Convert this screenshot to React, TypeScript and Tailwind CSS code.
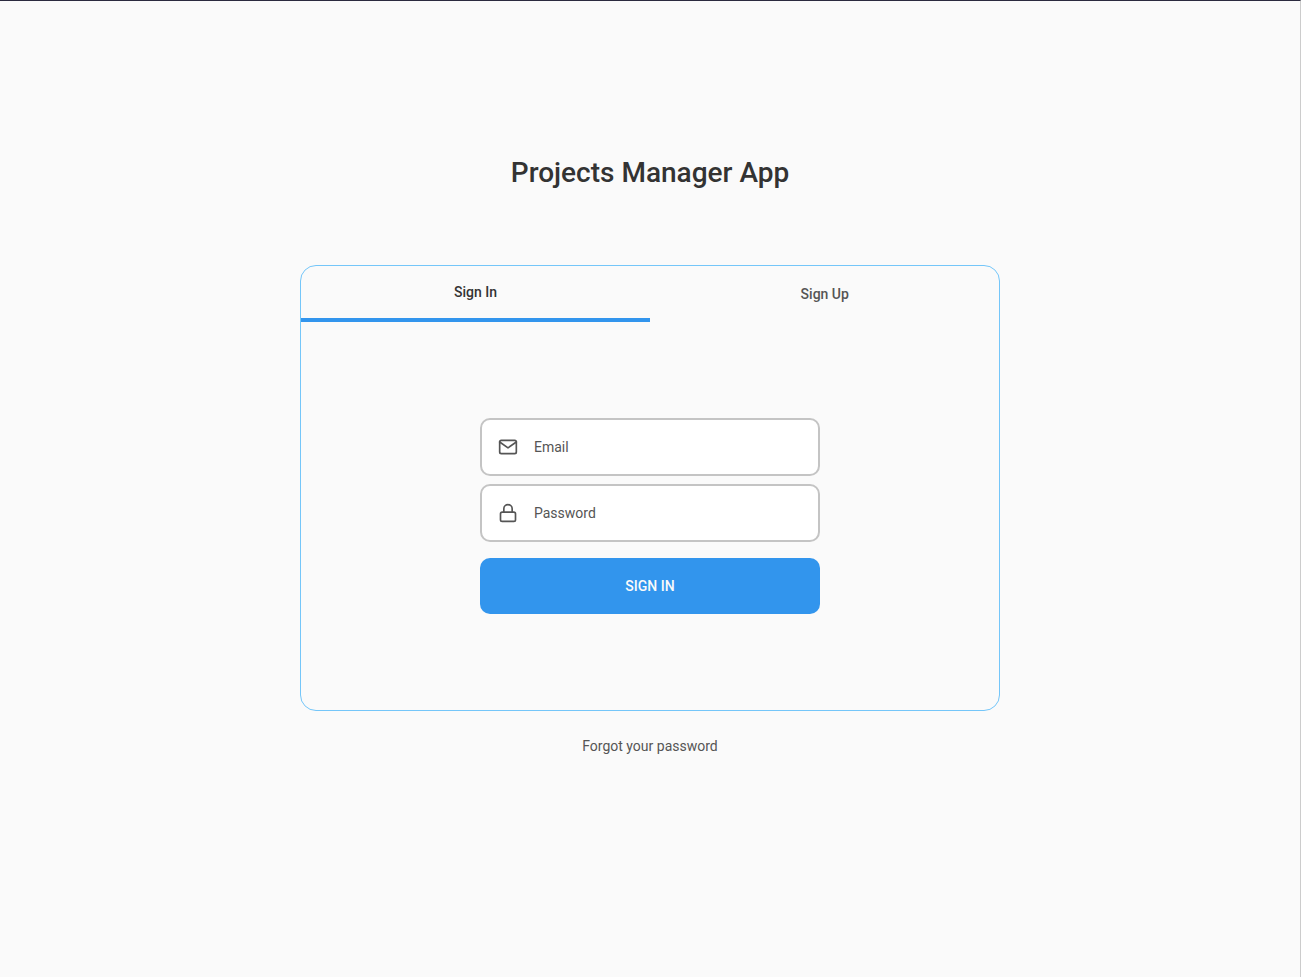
import { FiLock, FiMail } from 'react-icons/fi';
import type { IconType } from 'react-icons';

function Field({ icon: Icon, type, placeholder }: { icon: IconType; type: string; placeholder: string }) {
  return (
    <label className="flex h-[58px] items-center rounded-[10px] border-2 border-[#c4c4c4] bg-white px-4 text-[#555555]">
      <Icon size={20} className="mr-4 shrink-0" />
      <input
        type={type}
        placeholder={placeholder}
        className="min-w-0 flex-1 bg-transparent text-sm text-[#333333] outline-none placeholder:text-[#555555]"
      />
    </label>
  );
}

export default function App() {
  return (
    <div className="flex h-screen flex-col items-center border-t border-r border-t-[#2b2a3f] border-r-[#cccccc] bg-[#fafafa] pt-[151px] font-['Roboto',sans-serif] text-sm text-[#555555]">
      <h1 className="text-[28px] leading-[42px] font-medium text-[#333333]">Projects Manager App</h1>
      <main className="mt-[71px] flex h-[446px] w-[700px] flex-col rounded-2xl border border-[#74c6f9]">
        <nav className="flex h-14">
          <button className="w-1/2 border-b-4 border-[#3295ed] font-medium text-[#333333]">Sign In</button>
          <button className="w-1/2 pl-[0.5px] font-medium">Sign Up</button>
        </nav>
        <form className="mx-auto mt-24 flex w-[340px] flex-col gap-2">
          <Field icon={FiMail} type="email" placeholder="Email" />
          <Field icon={FiLock} type="password" placeholder="Password" />
          <button type="button" className="mt-2 h-14 rounded-[10px] bg-[#3295ed] font-medium text-[#fafafa]">
            SIGN IN
          </button>
        </form>
      </main>
      <a className="mt-[25px] leading-5">Forgot your password</a>
    </div>
  );
}
